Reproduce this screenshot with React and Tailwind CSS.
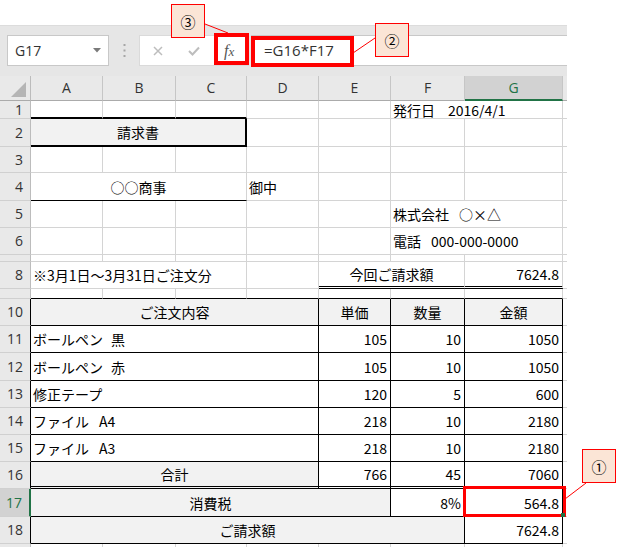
import React from 'react';

const SPAN = { 1: 'col-span-1', 2: 'col-span-2', 3: 'col-span-3', 4: 'col-span-4', 5: 'col-span-5', 6: 'col-span-6' };
const R = { g: 'border-r border-r-[#d4d4d4]', k: 'border-r border-r-black', k2: 'border-r-2 border-r-black', n: '' };
const B = { g: 'border-b border-b-[#d4d4d4]', k: 'border-b border-b-black', k2: 'border-b-2 border-b-black', d: 'border-b-[3px] border-b-black border-double', n: '' };
const AL = { l: 'justify-start pl-[2px]', c: 'justify-center', r: 'justify-end pr-[3px]' };

function C({ s = 1, r = 'g', b = 'g', a = 'l', g = false, children }) {
  return (
    <div className={`${SPAN[s]} ${R[r]} ${B[b]} ${AL[a]} ${g ? 'bg-[#f2f2f2]' : 'bg-white'} flex items-center overflow-hidden whitespace-nowrap`}>
      {children}
    </div>
  );
}

function RH({ n, k = false, sel = false }) {
  const cls = sel
    ? 'bg-[#d2d2d2] text-[#217346] border-r-2 border-r-[#217346]'
    : k
    ? 'bg-[#e9e9e9] text-[#333] border-r border-r-black'
    : 'bg-[#e9e9e9] text-[#333] border-r border-r-[#bcbcbc]';
  return (
    <div className={`${cls} border-b border-b-[#d0d0d0] flex items-center justify-end pr-[7px] font-['Open_Sans',sans-serif] text-[14px] overflow-hidden`}>
      {n}
    </div>
  );
}

function H() {
  return <div className="border-b border-b-[#d4d4d4] bg-white" />;
}

function Ribbon() {
  return (
    <div className="h-[51px] bg-[#e6e6e6] border-t border-t-[#dcdcdc] pt-[9px] font-['Open_Sans',sans-serif]">
      <div className="flex h-[31px] items-stretch">
        <div className="ml-[7px] w-[102px] bg-white border border-[#c8c8c8] flex items-center pl-[7px] text-[14px] text-[#333]">
          <span>G17</span>
          <svg className="ml-auto mr-[7px]" width="8" height="5" viewBox="0 0 8 5">
            <polygon points="0,0 8,0 4,4.5" fill="#7a7a7a" />
          </svg>
        </div>
        <div className="w-[30px] flex items-center justify-center">
          <svg width="3" height="13" viewBox="0 0 3 13">
            <rect x="0.5" y="0" width="2" height="2" fill="#a6a6a6" />
            <rect x="0.5" y="5.5" width="2" height="2" fill="#a6a6a6" />
            <rect x="0.5" y="11" width="2" height="2" fill="#a6a6a6" />
          </svg>
        </div>
        <div className="w-[110px] bg-white border border-[#dadada] flex items-center">
          <svg className="ml-[13px]" width="10" height="10" viewBox="0 0 10 10">
            <path d="M1 1 L9 9 M9 1 L1 9" stroke="#bdbdbd" strokeWidth="1.5" fill="none" />
          </svg>
          <svg className="ml-[25px]" width="12" height="10" viewBox="0 0 12 10">
            <path d="M1 5 L4.5 8.5 L11 1.5" stroke="#bdbdbd" strokeWidth="2" fill="none" />
          </svg>
          <span className="ml-[24px] font-['Liberation_Serif',serif] italic text-[16px] text-[#555] leading-none">
            f<span className="text-[13px]">x</span>
          </span>
        </div>
        <div className="ml-[2px] flex-1 bg-white border-y border-y-[#c8c8c8] flex items-center pl-[13px] text-[15px] text-[#333]">
          =G16*F17
        </div>
      </div>
    </div>
  );
}

function Grid() {
  const hd = "bg-[#e9e9e9] border-r border-r-[#c6c6c6] border-b border-b-[#ababab] flex items-center justify-center text-[#333] font-['Open_Sans',sans-serif] text-[14px]";
  return (
    <div className="grid grid-cols-[31px_72px_73px_71px_72px_72px_74px_98px_4px] grid-rows-[25px_18px_28px_26px_28px_27px_27px_7px_27px_10px_27px_27px_28px_27px_27px_27px_27px_28px_27px_12px] font-['Noto_Sans_CJK_JP',sans-serif] text-[14px] leading-none text-black">
      {/* header row */}
      <div className="bg-[#e9e9e9] border-r border-r-[#bcbcbc] border-b border-b-[#ababab] flex items-end justify-end pr-[4px] pb-[3px]">
        <svg width="15" height="15" viewBox="0 0 15 15">
          <polygon points="15,0 15,15 0,15" fill="#b5b5b5" />
        </svg>
      </div>
      <div className={hd}>A</div>
      <div className={hd}>B</div>
      <div className={hd}>C</div>
      <div className={hd}>D</div>
      <div className={hd}>E</div>
      <div className={hd}>F</div>
      <div className="bg-[#d2d2d2] border-r border-r-[#c6c6c6] border-b-2 border-b-[#217346] flex items-center justify-center text-[#217346] font-['Open_Sans',sans-serif] text-[14px]">G</div>
      <div className="bg-[#e9e9e9] border-b border-b-[#ababab]" />

      {/* row 1 */}
      <RH n="1" />
      <C b="k2" />
      <C b="k2" />
      <C b="k2" />
      <C />
      <C />
      <C s={2}>発行日<span className="ml-[13px]">2016/4/1</span></C>
      <H />

      {/* row 2 */}
      <RH n="2" />
      <C s={3} r="k2" b="k2" a="c" g>請求書</C>
      <C />
      <C />
      <C />
      <C />
      <H />

      {/* row 3 */}
      <RH n="3" />
      <C />
      <C />
      <C />
      <C />
      <C />
      <C />
      <C />
      <H />

      {/* row 4 */}
      <RH n="4" />
      <C s={3} b="k" a="c">○○商事</C>
      <C>御中</C>
      <C />
      <C />
      <C />
      <H />

      {/* row 5 */}
      <RH n="5" />
      <C />
      <C />
      <C />
      <C />
      <C />
      <C s={2}>株式会社<span className="ml-[10px]">○×△</span></C>
      <H />

      {/* row 6 */}
      <RH n="6" />
      <C />
      <C />
      <C />
      <C />
      <C />
      <C s={2}>電話<span className="ml-[10px]">000-000-0000</span></C>
      <H />

      {/* row 7 (nearly hidden) */}
      <RH n="" />
      <C />
      <C />
      <C />
      <C />
      <C />
      <C />
      <C />
      <H />

      {/* row 8 */}
      <RH n="8" />
      <C s={3}>※3月1日～3月31日ご注文分</C>
      <C />
      <C s={2} b="d" a="c">今回ご請求額</C>
      <C b="d" a="r">7624.8</C>
      <H />

      {/* row 9 (nearly hidden) */}
      <RH n="" />
      <C b="k" />
      <C b="k" />
      <C b="k" />
      <C b="k" />
      <C b="k" />
      <C b="k" />
      <C b="k" />
      <H />

      {/* row 10 */}
      <RH n="10" k />
      <C s={4} r="k" b="k" a="c" g>ご注文内容</C>
      <C r="k" b="k" a="c" g>単価</C>
      <C r="k" b="k" a="c" g>数量</C>
      <C r="k" b="k" a="c" g>金額</C>
      <H />

      {/* row 11 */}
      <RH n="11" k />
      <C s={4} r="k" b="k">ボールペン<span className="ml-[8px]">黒</span></C>
      <C r="k" b="k" a="r">105</C>
      <C r="k" b="k" a="r">10</C>
      <C r="k" b="k" a="r">1050</C>
      <H />

      {/* row 12 */}
      <RH n="12" k />
      <C s={4} r="k" b="k">ボールペン<span className="ml-[8px]">赤</span></C>
      <C r="k" b="k" a="r">105</C>
      <C r="k" b="k" a="r">10</C>
      <C r="k" b="k" a="r">1050</C>
      <H />

      {/* row 13 */}
      <RH n="13" k />
      <C s={4} r="k" b="k">修正テープ</C>
      <C r="k" b="k" a="r">120</C>
      <C r="k" b="k" a="r">5</C>
      <C r="k" b="k" a="r">600</C>
      <H />

      {/* row 14 */}
      <RH n="14" k />
      <C s={4} r="k" b="k">ファイル<span className="ml-[10px]">A4</span></C>
      <C r="k" b="k" a="r">218</C>
      <C r="k" b="k" a="r">10</C>
      <C r="k" b="k" a="r">2180</C>
      <H />

      {/* row 15 */}
      <RH n="15" k />
      <C s={4} r="k" b="k">ファイル<span className="ml-[10px]">A3</span></C>
      <C r="k" b="k" a="r">218</C>
      <C r="k" b="k" a="r">10</C>
      <C r="k" b="k" a="r">2180</C>
      <H />

      {/* row 16 */}
      <RH n="16" k />
      <C s={4} r="k" b="d" a="c" g>合計</C>
      <C r="k" b="d" a="r">766</C>
      <C r="k" b="d" a="r">45</C>
      <C r="k" b="d" a="r">7060</C>
      <H />

      {/* row 17 */}
      <RH n="17" sel />
      <C s={5} r="k" b="k" a="c" g>消費税</C>
      <C r="k" b="k" a="r">8%</C>
      <C r="k" b="k" a="r">564.8</C>
      <H />

      {/* row 18 */}
      <RH n="18" k />
      <C s={6} r="k" b="k" a="c" g>ご請求額</C>
      <C r="k" b="k" a="r">7624.8</C>
      <H />

      {/* row 19 partial */}
      <RH n="" />
      <C />
      <C />
      <C />
      <C />
      <C />
      <C />
      <C />
      <H />
    </div>
  );
}

function Note({ className, children }) {
  return (
    <div className={`absolute w-[34px] h-[34px] bg-[#fbe5d6] border border-[#ff0000] flex items-center justify-center font-['Noto_Sans_CJK_JP',sans-serif] text-[15px] leading-none text-black ${className}`}>
      {children}
    </div>
  );
}

export default function App() {
  return (
    <div className="relative w-[621px] h-[547px] bg-white overflow-hidden">
      <div className="pt-[25px] w-[567px]">
        <Ribbon />
        <Grid />
      </div>

      {/* highlight boxes */}
      <div className="absolute left-[214px] top-[33px] w-[35px] h-[32px] border-4 border-[#ff0000]" />
      <div className="absolute left-[251px] top-[36px] w-[103px] h-[31px] border-4 border-[#ff0000]" />
      <div className="absolute left-[463px] top-[486px] w-[103px] h-[31px] border-[3px] border-[#ff0000]" />
      <div className="absolute left-[561px] top-[513px] w-[4px] h-[4px] bg-[#217346]" />

      {/* leader lines */}
      <svg className="absolute left-0 top-0 pointer-events-none" width="621" height="547" viewBox="0 0 621 547">
        <line x1="205" y1="24" x2="228" y2="33" stroke="#ff0000" strokeWidth="1" />
        <line x1="375" y1="38" x2="353" y2="53" stroke="#ff0000" strokeWidth="1" />
        <line x1="586" y1="483" x2="565" y2="499" stroke="#ff0000" strokeWidth="1" />
      </svg>

      <Note className="left-[171px] top-[4px]">③</Note>
      <Note className="left-[375px] top-[23px]">②</Note>
      <Note className="left-[582px] top-[449px]">①</Note>
    </div>
  );
}
